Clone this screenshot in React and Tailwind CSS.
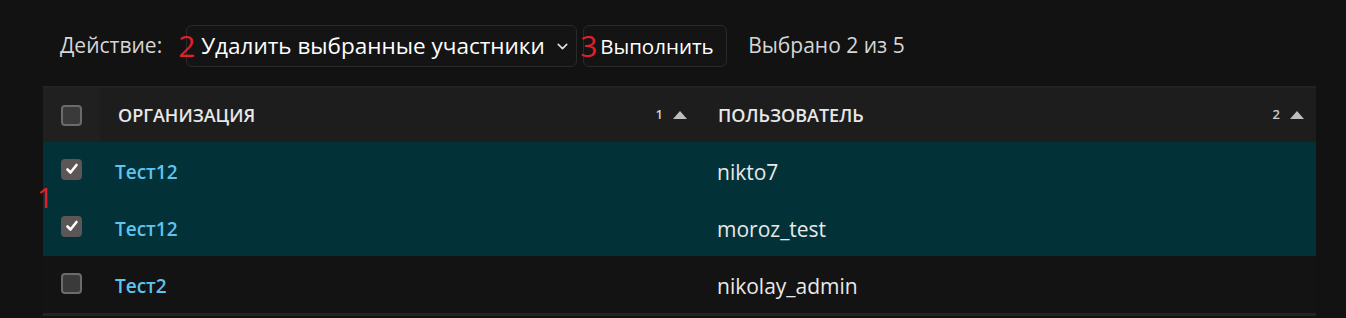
import { ChevronDown } from 'lucide-react'

const rows = [
	{ org: 'Тест12', user: 'nikto7', checked: true },
	{ org: 'Тест12', user: 'moroz_test', checked: true },
	{ org: 'Тест2', user: 'nikolay_admin', checked: false },
]

function Box({ checked }) {
	return (
		<span className={'flex h-[21px] w-[21px] items-center justify-center rounded-[4px] border-2 ' + (checked ? 'border-[#5d5656] bg-[#5d5656]' : 'border-[#6b6b6b] bg-[#3a3a3a]')}>
			{checked && (
				<svg width="14" height="14" viewBox="0 0 14 14">
					<path d="M2.5 7.5 L5.5 10.5 L11.5 3" fill="none" stroke="#fff" strokeWidth="2.6" strokeLinecap="round" strokeLinejoin="round" />
				</svg>
			)}
		</span>
	)
}

function Sort({ n }) {
	return (
		<span className="flex items-center gap-[10px] text-[13px] font-semibold text-[#cfcfcf]">
			{n}
			<svg width="14" height="8" viewBox="0 0 14 8"><path d="M0 8 L7 0 L14 8 Z" fill="#bdbdbd" /></svg>
		</span>
	)
}

export default function App() {
	return (
		<div className="relative h-[318px] w-[1346px] overflow-hidden bg-[#121212] font-['Segoe_UI','Open_Sans',sans-serif] text-[#e6e6e6]">
			{/* toolbar */}
			<div className="flex h-[86px] items-center pl-[60px] pt-[6px]">
				<span className="text-[21px] text-[#d6d6d6]">Действие:</span>
				<div className="relative ml-[24px] flex h-[42px] w-[391px] items-center rounded-[6px] border border-[#2a2a2a] bg-[#141414] pl-[14px] pr-[5px]">
					<span className="absolute left-[-9px] top-[3px] text-[30px] leading-[34px] text-[#e0202a]">2</span>
					<span className="whitespace-nowrap text-[22.5px] text-white">Удалить выбранные участники</span>
					<ChevronDown className="ml-auto h-[17px] w-[17px] text-[#e0e0e0]" strokeWidth={2.2} />
				</div>
				<div className="relative ml-[6px] flex h-[42px] w-[144px] items-center rounded-[6px] border border-[#2a2a2a] bg-[#141414] pl-[16px]">
					<span className="absolute left-[-4px] top-[3px] text-[30px] leading-[34px] text-[#e0202a]">3</span>
					<span className="text-[20.5px] text-white">Выполнить</span>
				</div>
				<span className="ml-[21px] text-[21px] text-[#d6d6d6]">Выбрано 2 из 5</span>
			</div>

			{/* table */}
			<div className="relative ml-[43px] w-[1273px] border-b-[3px] border-[#232323]">
				<span className="absolute left-[-6px] top-[94px] text-[28px] leading-[34px] text-[#e0202a]">1</span>
				<div className="grid h-[56px] grid-cols-[57px_600px_1fr] border-t-[2px] border-[#232323] bg-[#1d1d1d]">
					<div className="flex items-center justify-center bg-[#202020] pr-[1px]"><Box /></div>
					<div className="flex items-center pl-[18px] pr-[13px]">
						<span className="text-[18px] font-semibold text-[#e8e8e8]">ОРГАНИЗАЦИЯ</span>
						<span className="ml-auto"><Sort n="1" /></span>
					</div>
					<div className="flex items-center pl-[18px] pr-[12px]">
						<span className="text-[18px] font-semibold text-[#e8e8e8]">ПОЛЬЗОВАТЕЛЬ</span>
						<span className="ml-auto"><Sort n="2" /></span>
					</div>
				</div>
				{rows.map((r, i) => (
					<div key={i} className={'grid h-[57px] grid-cols-[57px_600px_1fr] ' + (r.checked ? 'bg-[#023238]' : 'bg-[#131313]')}>
						<div className="flex items-center justify-center pb-[3px]"><Box checked={r.checked} /></div>
						<div className="flex items-center pl-[15px] pt-[4px] text-[19px] font-semibold text-[#5ec4ee]">{r.org}</div>
						<div className="flex items-center pl-[17px] pt-[4px] text-[21px] text-[#e8e8e8]">{r.user}</div>
					</div>
				))}
			</div>
		</div>
	)
}
